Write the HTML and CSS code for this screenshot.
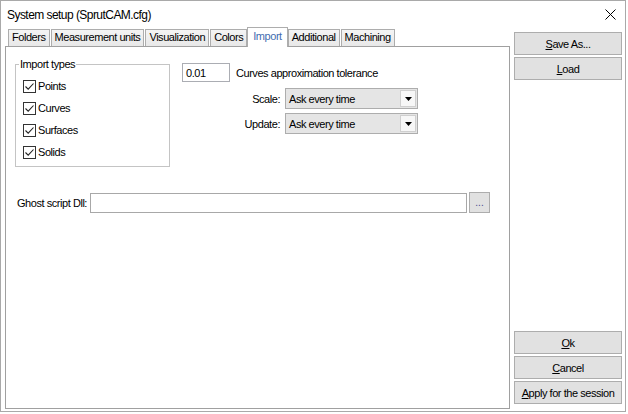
FILE: index.html
```html
<!DOCTYPE html>
<html>
<head>
<meta charset="utf-8">
<link rel="stylesheet" href="styles.css">
</head>
<body>
<div class="window">
  <div class="titlebar">
    <span class="title">System setup (SprutCAM.cfg)</span>
    <svg class="close" width="11" height="11" viewBox="0 0 11 11"><path d="M0.5 0.5 L10.5 10.5 M10.5 0.5 L0.5 10.5" stroke="#000" stroke-width="1" fill="none"/></svg>
  </div>
  <div class="main">
    <div class="tabs-area">
      <div class="tabstrip">
        <div class="tab">Folders</div>
        <div class="tab">Measurement units</div>
        <div class="tab">Visualization</div>
        <div class="tab">Colors</div>
        <div class="tab active">Import</div>
        <div class="tab">Additional</div>
        <div class="tab">Machining</div>
      </div>
      <div class="panel">
        <div class="top-row">
          <fieldset class="group">
            <legend>Import types</legend>
            <div class="check-row"><span class="checkbox"><svg width="11" height="11" viewBox="0 0 11 11"><path d="M1.5 5.5 L4.2 8.2 L9.5 2.5" stroke="#222" stroke-width="1.1" fill="none"/></svg></span><span>Points</span></div>
            <div class="check-row"><span class="checkbox"><svg width="11" height="11" viewBox="0 0 11 11"><path d="M1.5 5.5 L4.2 8.2 L9.5 2.5" stroke="#222" stroke-width="1.1" fill="none"/></svg></span><span>Curves</span></div>
            <div class="check-row"><span class="checkbox"><svg width="11" height="11" viewBox="0 0 11 11"><path d="M1.5 5.5 L4.2 8.2 L9.5 2.5" stroke="#222" stroke-width="1.1" fill="none"/></svg></span><span>Surfaces</span></div>
            <div class="check-row"><span class="checkbox"><svg width="11" height="11" viewBox="0 0 11 11"><path d="M1.5 5.5 L4.2 8.2 L9.5 2.5" stroke="#222" stroke-width="1.1" fill="none"/></svg></span><span>Solids</span></div>
          </fieldset>
          <div class="options">
            <div class="tol-row">
              <div class="textbox tol">0.01</div>
              <span class="tol-label">Curves approximation tolerance</span>
            </div>
            <div class="combo-grid">
              <span class="combo-label">Scale:</span>
              <div class="combo"><span>Ask every time</span><span class="combo-btn"><svg width="7" height="4" viewBox="0 0 7 4"><path d="M0 0 H7 L3.5 4 Z" fill="#000"/></svg></span></div>
              <span class="combo-label">Update:</span>
              <div class="combo"><span>Ask every time</span><span class="combo-btn"><svg width="7" height="4" viewBox="0 0 7 4"><path d="M0 0 H7 L3.5 4 Z" fill="#000"/></svg></span></div>
            </div>
          </div>
        </div>
        <div class="ghost-row">
          <span class="ghost-label">Ghost script Dll:</span>
          <div class="textbox ghost"></div>
          <div class="btn dots">...</div>
        </div>
      </div>
    </div>
    <div class="side">
      <div class="btn-group">
        <div class="btn"><u>S</u>ave As...</div>
        <div class="btn"><u>L</u>oad</div>
      </div>
      <div class="btn-group">
        <div class="btn"><u>O</u>k</div>
        <div class="btn"><u>C</u>ancel</div>
        <div class="btn"><u>A</u>pply for the session</div>
      </div>
    </div>
  </div>
</div>
</body>
</html>
```

FILE: styles.css
```css
* { box-sizing: border-box; }
html, body { margin: 0; padding: 0; background: #fff; }
body {
  font-family: Tahoma, "Liberation Sans", Arial, sans-serif;
  font-size: 11px;
  letter-spacing: -0.45px;
  color: #000;
}
.window {
  width: 626px;
  height: 412px;
  border: 1px solid #a9a9a9;
  display: flex;
  flex-direction: column;
  background: #fff;
}
.titlebar {
  height: 26px;
  display: flex;
  align-items: center;
  justify-content: space-between;
  padding: 0 9px 0 6px;
}
.title { font-size: 12px; letter-spacing: -0.55px; line-height: 14px; padding-top: 1px; }
.close { display: block; }
.main {
  flex: 1;
  display: flex;
  padding: 0 3px 2px 4px;
}
.tabs-area {
  width: 505px;
  display: flex;
  flex-direction: column;
}
.tabstrip {
  height: 19px;
  display: flex;
  align-items: flex-end;
  gap: 1px;
  padding-left: 3px;
  position: relative;
  z-index: 1;
}
.tab {
  height: 17px;
  padding: 0 3px;
  border: 1px solid #adadad;
  border-bottom: none;
  background: linear-gradient(#f4f4f4, #e8e8e8);
  line-height: 15px;
  white-space: nowrap;
}
.tab.active {
  height: 20px;
  margin: 0 -1px -1px;
  padding: 1px 5px 0;
  background: #fff;
  color: #3f6db0;
}
.panel {
  flex: 1;
  border: 1px solid #a0a0a0;
  padding: 11px 0 0 9px;
}
.top-row {
  display: flex;
  align-items: flex-start;
}
.group {
  margin: 0;
  width: 155px;
  border: 1px solid #c4c4c4;
  padding: 4px 0 3px 3px;
  min-inline-size: 0;
}
.group legend {
  padding: 0 1px;
  line-height: 13px;
}
.check-row {
  height: 22px;
  display: flex;
  align-items: center;
  padding-left: 4px;
}
.checkbox {
  width: 13px;
  height: 13px;
  border: 1px solid #333;
  background: #fff;
  display: flex;
  align-items: center;
  justify-content: center;
  margin-right: 2px;
}
.checkbox svg { display: block; }
.options {
  margin-left: 12px;
  padding-top: 5px;
  display: flex;
  flex-direction: column;
}
.tol-row {
  display: flex;
  align-items: center;
}
.textbox {
  border: 1px solid #abadb3;
  background: #fff;
  display: flex;
  align-items: center;
  padding-left: 3px;
}
.tol { width: 48px; height: 19px; }
.tol-label { margin-left: 6px; }
.combo-grid {
  margin-top: 6px;
  display: grid;
  grid-template-columns: 98px 133px;
  column-gap: 5px;
  row-gap: 4px;
  align-items: center;
}
.combo-label { justify-self: end; }
.combo {
  height: 21px;
  border: 1px solid #adadad;
  background: #e5e5e5;
  display: flex;
  align-items: center;
  justify-content: space-between;
  padding-left: 3px;
}
.combo-btn {
  width: 16px;
  height: 17px;
  margin-right: 1px;
  border: 1px solid #cfcfcf;
  background: #f7f7f7;
  display: flex;
  align-items: center;
  justify-content: center;
}
.combo-btn svg { display: block; }
.ghost-row {
  margin: 25px 19px 0 2px;
  display: flex;
  align-items: center;
}
.ghost-label { flex: 0 0 73px; }
.ghost { flex: 1; height: 20px; border-color: #a8a8a8; }
.btn {
  height: 23px;
  border: 1px solid #adadad;
  background: #e1e1e1;
  display: flex;
  align-items: center;
  justify-content: center;
  white-space: nowrap;
}
.dots {
  width: 21px;
  height: 21px;
  margin-left: 2px;
  color: #4b4b8f;
  letter-spacing: 0;
  font-size: 10px;
}
.side {
  width: 108px;
  margin-left: 4px;
  padding: 5px 0;
  display: flex;
  flex-direction: column;
  justify-content: space-between;
}
.btn-group {
  display: flex;
  flex-direction: column;
  gap: 2px;
}
```
